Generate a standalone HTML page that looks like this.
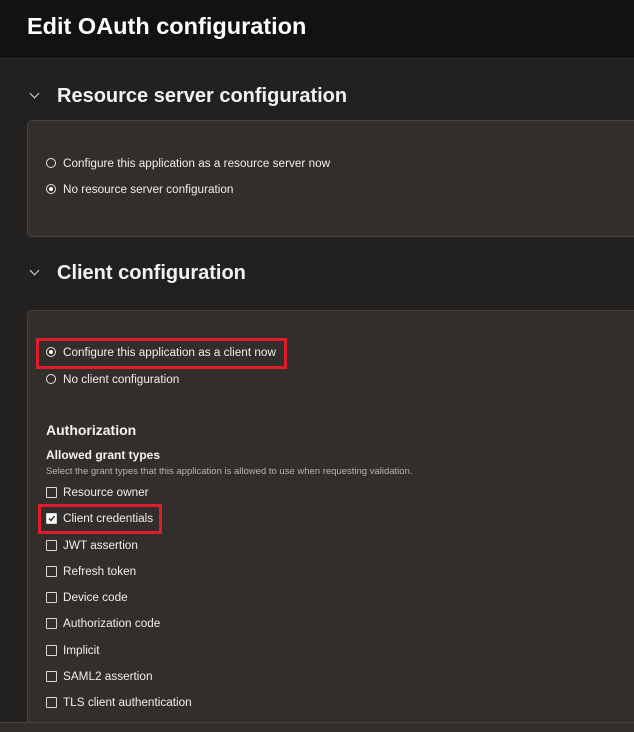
<!DOCTYPE html>
<html><head><style>
html,body{margin:0;width:634px;height:732px;overflow:hidden}
body{background:#222120;font-family:"Liberation Sans",sans-serif;color:#f4f2f0;position:relative}
.hdr{position:absolute;left:0;top:0;width:634px;height:58px;background:#131211;border-bottom:1px solid #2e2b29}
.t{position:absolute;white-space:nowrap}
.panel{position:absolute;left:27px;width:620px;background:#322e2b;border:1px solid #46423f;border-radius:5px;box-sizing:border-box}
.r{position:absolute;left:46px;width:10px;height:10px;border:1px solid #e8e6e4;border-radius:50%;box-sizing:border-box}
.r.on::after{content:"";position:absolute;left:2px;top:2px;width:4px;height:4px;border-radius:50%;background:#fff}
.c{position:absolute;left:46px;width:11px;height:11px;border:1px solid #d8d6d4;border-radius:1px;box-sizing:border-box}
.c.on{background:#fff}
.lbl{font-size:11.75px;left:63px;color:#f0eeec}
.red{position:absolute;border:3px solid #e01b2a;box-sizing:border-box}
.chev{position:absolute;left:31px;width:6px;height:6px;border-right:1.6px solid #ddd;border-bottom:1.6px solid #ddd;transform:rotate(45deg)}
</style></head><body>
<div class="hdr"></div>
<div class="t" style="left:27px;top:13px;font-size:23.5px;font-weight:bold;color:#fff">Edit OAuth configuration</div>
<div class="chev" style="top:90px"></div>
<div class="t" style="left:57px;top:85px;font-size:20px;font-weight:bold">Resource server configuration</div>
<div class="panel" style="top:120px;height:117px"></div>
<div class="r" style="top:158px"></div><div class="t lbl" style="top:157px">Configure this application as a resource server now</div>
<div class="r on" style="top:184px"></div><div class="t lbl" style="top:183px">No resource server configuration</div>
<div class="chev" style="top:267px"></div>
<div class="t" style="left:57px;top:262px;font-size:20px;font-weight:bold">Client configuration</div>
<div class="panel" style="top:310px;height:420px"></div>
<div style="position:absolute;left:0;top:722px;width:634px;height:10px;background:#322e2b;border-top:1px solid #46423f"></div>
<div class="r on" style="top:347px"></div><div class="t lbl" style="top:346px">Configure this application as a client now</div>
<div class="red" style="left:36px;top:338px;width:251px;height:31px"></div>
<div class="r" style="top:374px"></div><div class="t lbl" style="top:373px">No client configuration</div>
<div class="t" style="left:46px;top:422px;font-size:14px;font-weight:bold">Authorization</div>
<div class="t" style="left:46px;top:448px;font-size:12px;font-weight:bold">Allowed grant types</div>
<div class="t" style="left:46px;top:466px;font-size:9.5px;color:#b8b4b0">Select the grant types that this application is allowed to use when requesting validation.</div>
<div class="c" style="top:487px"></div><div class="t lbl" style="top:486px">Resource owner</div>
<div class="c on" style="top:513px"><svg width="9" height="9" style="position:absolute;left:0;top:0"><path d="M2 4.5L4 6.5L7.5 2" stroke="#222" stroke-width="1.4" fill="none"/></svg></div><div class="t lbl" style="top:512px">Client credentials</div>
<div class="red" style="left:38px;top:504px;width:124px;height:30px"></div>
<div class="c" style="top:540px"></div><div class="t lbl" style="top:539px">JWT assertion</div>
<div class="c" style="top:566px"></div><div class="t lbl" style="top:565px">Refresh token</div>
<div class="c" style="top:592px"></div><div class="t lbl" style="top:591px">Device code</div>
<div class="c" style="top:618px"></div><div class="t lbl" style="top:617px">Authorization code</div>
<div class="c" style="top:645px"></div><div class="t lbl" style="top:644px">Implicit</div>
<div class="c" style="top:671px"></div><div class="t lbl" style="top:670px">SAML2 assertion</div>
<div class="c" style="top:697px"></div><div class="t lbl" style="top:696px">TLS client authentication</div>
</body></html>
